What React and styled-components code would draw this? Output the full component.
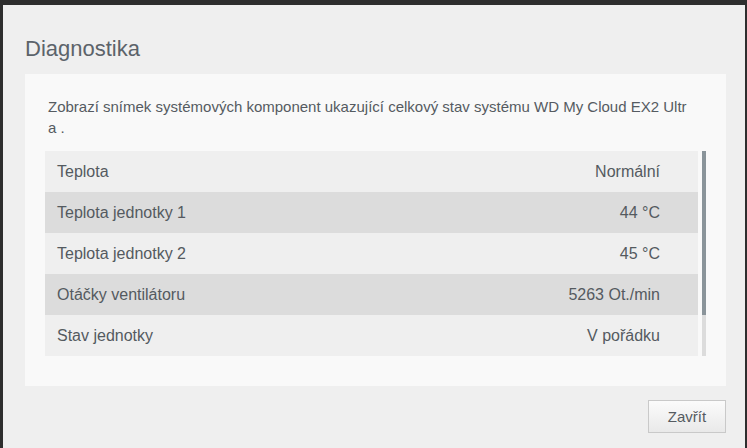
import React from "react";
import styled, { createGlobalStyle } from "styled-components";

const Global = createGlobalStyle`
  html, body { margin: 0; padding: 0; background: #2e2e2e; height: 100%; overflow: hidden; }
  body { font-family: "Liberation Sans", Arial, sans-serif; }
`;

const Backdrop = styled.div`
  width: 747px;
  height: 448px;
  background: #2e2e2e;
  padding: 5px 2px 0 3px;
  box-sizing: border-box;
  display: flex;
`;

const Modal = styled.div`
  flex: 1;
  background: #efefef;
  padding: 30px 19px 0 22px;
  display: flex;
  flex-direction: column;
`;

const Title = styled.h1`
  margin: 0;
  height: 39px;
  font-size: 22px;
  font-weight: normal;
  color: #5c636a;
  line-height: 28px;
`;

const Panel = styled.div`
  background: #f9f9f9;
  padding: 22px 20px 30px 20px;
  display: flex;
  flex-direction: column;
`;

const Desc = styled.p`
  margin: 0 0 13px 3px;
  font-size: 15px;
  line-height: 21px;
  color: #555b61;
`;

const TableWrap = styled.div`
  display: flex;
  gap: 4px;
  height: 205px;
`;

const Rows = styled.div`
  flex: 1;
  display: flex;
  flex-direction: column;
`;

const Row = styled.div`
  height: 41px;
  display: flex;
  align-items: center;
  justify-content: space-between;
  padding: 0 38px 0 12px;
  background: ${(p) => (p.$alt ? "#dcdcdc" : "#efefef")};
  font-size: 16px;
  color: #545a60;
`;

const Track = styled.div`
  width: 4px;
  background: #dcdcdc;
  display: flex;
  flex-direction: column;
`;

const Thumb = styled.div`
  background: #8a949a;
`;

const Footer = styled.div`
  display: flex;
  justify-content: flex-end;
  padding-top: 14px;
`;

const Button = styled.button`
  width: 78px;
  height: 33px;
  border: 1px solid #c9c9c9;
  background: linear-gradient(#fbfbfb, #e9e9e9);
  font-family: "Liberation Sans", Arial, sans-serif;
  font-size: 15px;
  color: #555b61;
  padding: 0;
`;

const data = [
  ["Teplota", "Normální"],
  ["Teplota jednotky 1", "44 °C"],
  ["Teplota jednotky 2", "45 °C"],
  ["Otáčky ventilátoru", "5263 Ot./min"],
  ["Stav jednotky", "V pořádku"],
];

export default function App() {
  return (
    <>
      <Global />
      <Backdrop>
        <Modal>
          <Title>Diagnostika</Title>
          <Panel>
            <Desc>
              Zobrazí snímek systémových komponent ukazující celkový stav systému WD My Cloud EX2 Ultr
              <br />a .
            </Desc>
            <TableWrap>
              <Rows>
                {data.map(([k, v], i) => (
                  <Row key={k} $alt={i % 2 === 1}>
                    <span>{k}</span>
                    <span>{v}</span>
                  </Row>
                ))}
              </Rows>
              <Track>
                <Thumb style={{ height: "80%" }} />
              </Track>
            </TableWrap>
          </Panel>
          <Footer>
            <Button>Zavřít</Button>
          </Footer>
        </Modal>
      </Backdrop>
    </>
  );
}
